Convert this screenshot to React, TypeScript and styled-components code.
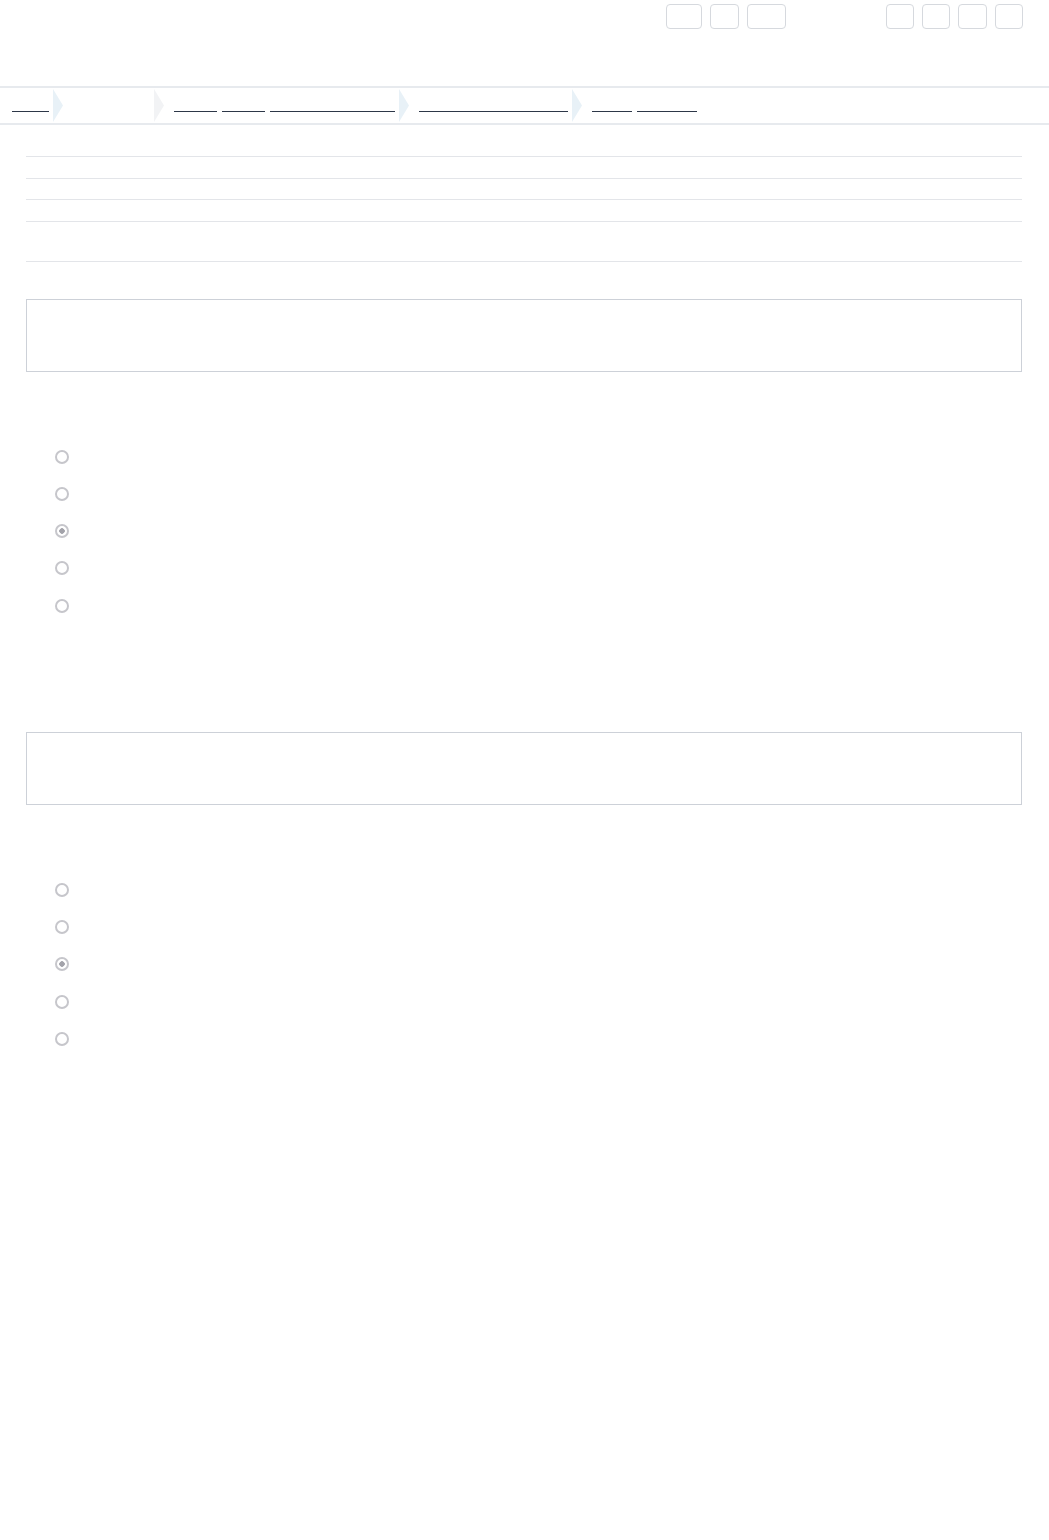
import React, { FC } from 'react'
import styled, { createGlobalStyle } from 'styled-components'

const palette = {
  INK: '#2d3748',
  LINE: '#e3e5e9',
  BOX: '#cdd1d8',
  BUTTON: '#d6d9de',
  BAR: '#e7eaee',
  ARROW_BLUE: '#e8f1f7',
  ARROW_GRAY: '#f2f3f5',
  RADIO: '#c6c6cb',
  RADIO_DOT: '#a3a3aa',
}

type Word = { text: string; width: number }

const crumbs: Array<{ words: Word[]; link: boolean; arrow?: string }> = [
  { words: [{ text: 'Home', width: 37 }], link: true, arrow: palette.ARROW_BLUE },
  { words: [{ text: 'Overzicht', width: 77 }], link: false, arrow: palette.ARROW_GRAY },
  {
    words: [
      { text: 'Deel', width: 43 },
      { text: 'twee', width: 43 },
      { text: 'Vragenlijst module', width: 125 },
    ],
    link: true,
    arrow: palette.ARROW_BLUE,
  },
  { words: [{ text: 'Hoofdstuk onderwerp', width: 149 }], link: true, arrow: palette.ARROW_BLUE },
  {
    words: [
      { text: 'Test', width: 40 },
      { text: 'vragen', width: 60 },
    ],
    link: true,
  },
]

const infoRows = [
  { label: 'Naam', height: 22 },
  { label: 'Datum', height: 21 },
  { label: 'Status', height: 22 },
  { label: 'Omschrijving', height: 41 },
]

const options = ['Optie A', 'Optie B', 'Optie C', 'Optie D', 'Optie E']

const Question: FC<{ name: string }> = ({ name }) => (
  <Section>
    <Box>Vraag</Box>
    <Prompt>Kies één antwoord</Prompt>
    <Options>
      {options.map((option, i) => (
        <Option key={option}>
          <Radio type="radio" name={name} disabled defaultChecked={i === 2} />
          <span>{option}</span>
        </Option>
      ))}
    </Options>
  </Section>
)

export default function App() {
  return (
    <>
      <GlobalStyle />
      <Header>
        <Group>
          <Button $w={36}>Prev</Button>
          <Button $w={29}>Up</Button>
          <Button $w={39}>Next</Button>
        </Group>
        <Group>
          <Button $w={28}>A</Button>
          <Button $w={28}>B</Button>
          <Button $w={29}>C</Button>
          <Button $w={28}>D</Button>
        </Group>
      </Header>

      <Crumbs>
        {crumbs.map((crumb, i) => (
          <React.Fragment key={i}>
            <Crumb $first={i === 0}>
              {crumb.words.map((word) => (
                <CrumbWord key={word.text} $w={word.width} $link={crumb.link}>
                  {word.text}
                </CrumbWord>
              ))}
            </Crumb>
            {crumb.arrow && <Arrow $color={crumb.arrow} />}
          </React.Fragment>
        ))}
      </Crumbs>

      <Main>
        <Info>
          {infoRows.map((row) => (
            <InfoRow key={row.label} $h={row.height}>
              {row.label}
            </InfoRow>
          ))}
        </Info>

        <Question name="q1" />
        <Question name="q2" />
      </Main>
    </>
  )
}

const GlobalStyle = createGlobalStyle`
  html, body {
    margin: 0;
    background: #fff;
  }

  body {
    color: transparent;
    font-family: 'Liberation Sans', Arial, sans-serif;
    font-size: 14px;
  }
`
const Header = styled.header`
  display: flex;
  justify-content: flex-end;
  gap: 100px;
  box-sizing: border-box;
  height: 86px;
  padding: 4px 26px 0 0;
`
const Group = styled.div`
  display: flex;
  gap: 8px;
`
const Button = styled.button<{ $w: number }>`
  box-sizing: border-box;
  width: ${(p) => p.$w}px;
  height: 25px;
  padding: 0;
  border: 1px solid ${palette.BUTTON};
  border-radius: 4px;
  background: #fff;
  color: transparent;
  font-size: 12px;
  overflow: hidden;
`
const Crumbs = styled.nav`
  display: flex;
  box-sizing: border-box;
  height: 39px;
  border-top: 2px solid ${palette.BAR};
  border-bottom: 2px solid ${palette.BAR};
`
const Crumb = styled.div<{ $first: boolean }>`
  display: flex;
  align-items: flex-start;
  gap: 5px;
  padding: 9px 4px 0 ${(p) => (p.$first ? 12 : 10)}px;
`
const CrumbWord = styled.span<{ $w: number; $link: boolean }>`
  display: inline-block;
  box-sizing: border-box;
  width: ${(p) => p.$w}px;
  height: 15px;
  overflow: hidden;
  border-bottom: 1px solid ${(p) => (p.$link ? palette.INK : 'transparent')};
  line-height: 14px;
  white-space: nowrap;
`
const Arrow = styled.span<{ $color: string }>`
  flex: none;
  width: 10px;
  margin: 1px 0;
  background: ${(p) => p.$color};
  clip-path: polygon(0 0, 100% 50%, 0 100%);
`
const Main = styled.main`
  padding: 31px 27px 0 26px;
`
const Info = styled.div`
  display: flex;
  flex-direction: column;
`
const InfoRow = styled.div<{ $h: number }>`
  box-sizing: border-box;
  height: ${(p) => p.$h}px;
  border-top: 1px solid ${palette.LINE};
  font-size: 12px;

  &:last-child {
    border-bottom: 1px solid ${palette.LINE};
  }
`
const Section = styled.section`
  margin-top: 37px;

  & + & {
    margin-top: 108px;
  }
`
const Box = styled.div`
  box-sizing: border-box;
  height: 73px;
  padding: 10px;
  border: 1px solid ${palette.BOX};
`
const Prompt = styled.p`
  box-sizing: border-box;
  height: 66px;
  margin: 0;
  padding-top: 24px;
`
const Options = styled.ul`
  margin: 0;
  padding: 0;
  list-style: none;
`
const Option = styled.li`
  display: flex;
  align-items: center;
  gap: 10px;
  height: 37.25px;
  padding-left: 29px;
`
const Radio = styled.input`
  appearance: none;
  box-sizing: border-box;
  width: 14px;
  height: 14px;
  margin: 0;
  border: 2px solid ${palette.RADIO};
  border-radius: 50%;
  background: #fff;

  &:checked {
    background: radial-gradient(circle, ${palette.RADIO_DOT} 0 2.5px, #fff 3px);
  }
`
